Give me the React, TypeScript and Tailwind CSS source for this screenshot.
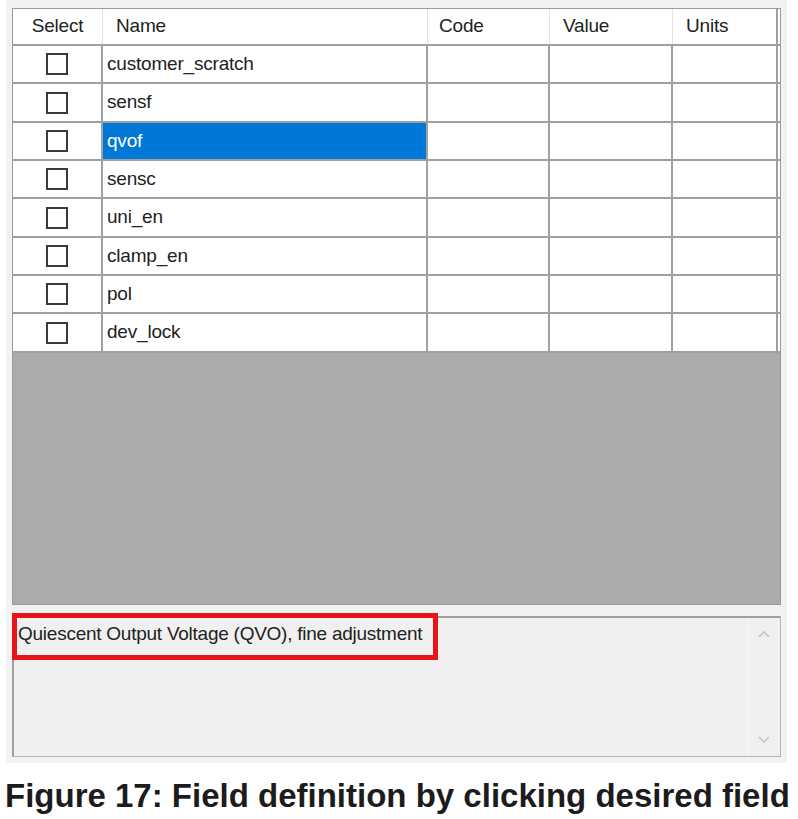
const FIELDS = ['customer_scratch', 'sensf', 'qvof', 'sensc', 'uni_en', 'clamp_en', 'pol', 'dev_lock'];
const SELECTED = 'qvof';

export default function App() {
  return (
    <div className="w-[798px] h-[819px] bg-white font-['Liberation_Sans',Arial,sans-serif] text-[#222]">
      {/* window panel */}
      <div className="w-[781px] ml-[6px] pt-[8px] px-[6px] pb-[6px] bg-[#f2f2f2]">
        {/* grid control */}
        <div className="h-[597px] border border-[#9a9a9a] bg-[#ababab] flex flex-col">
          <div className="flex h-[37px] bg-white border-b-2 border-[#a0a0a0] text-[19px] tracking-[-0.2px]">
            <div className="w-[90px] flex items-center justify-center border-r border-[#e3e3e3]">Select</div>
            <div className="w-[325px] flex items-center pl-[13px] border-r border-[#e3e3e3]">Name</div>
            <div className="w-[122px] flex items-center pl-[11px] border-r border-[#e3e3e3]">Code</div>
            <div className="w-[123px] flex items-center pl-[13px] border-r border-[#e3e3e3]">Value</div>
            <div className="w-[105px] flex items-center pl-[13px] border-r-2 border-[#a0a0a0]">Units</div>
          </div>
          {FIELDS.map((f, i) => (
            <div
              key={f}
              className={`flex bg-white border-b-2 border-[#a0a0a0] text-[19px] tracking-[-0.2px] ${i % 3 === 1 ? 'h-[39px]' : 'h-[38px]'}`}
            >
              <div className="w-[90px] flex items-center justify-center border-r-2 border-[#a0a0a0]">
                <span className="block w-[22px] h-[22px] border-2 border-[#3a3a3a] bg-white" />
              </div>
              <div
                className={`w-[325px] flex items-center pl-[4px] border-r-2 border-[#a0a0a0] ${
                  f === SELECTED ? 'bg-[#0078d7] text-white' : ''
                }`}
              >
                {f}
              </div>
              <div className="w-[122px] border-r-2 border-[#a0a0a0]" />
              <div className="w-[123px] border-r-2 border-[#a0a0a0]" />
              <div className="w-[105px] border-r-2 border-[#a0a0a0]" />
            </div>
          ))}
        </div>

        {/* description box */}
        <div className="relative mt-[11px] h-[141px] flex bg-[#f0f0f0] border-t-2 border-l-2 border-[#a0a0a0] border-r border-b border-r-[#b5b5b5] border-b-[#b5b5b5]">
          <div className="flex-1 pl-[4px] pt-[4px] text-[19px] tracking-[-0.25px] leading-[24px]">
            Quiescent Output Voltage (QVO), fine adjustment
          </div>
          <div className="w-[33px] flex flex-col items-center justify-between py-[12px] border-l border-[#f8f8f8]">
            <svg width="12" height="8" viewBox="0 0 12 8" fill="none" stroke="#c4c4c4" strokeWidth="1.6">
              <path d="M1 7 L6 2 L11 7" />
            </svg>
            <svg width="12" height="8" viewBox="0 0 12 8" fill="none" stroke="#c4c4c4" strokeWidth="1.6">
              <path d="M1 1 L6 6 L11 1" />
            </svg>
          </div>
          {/* annotation highlight */}
          <div className="absolute left-[-2px] top-[-5px] w-[426px] h-[47px] border-[5px] border-[#e8141c]" />
        </div>
      </div>

      <div className="mt-[15px] pl-[5px] text-[33px] leading-[36px] font-bold text-[#1c1c1c] whitespace-nowrap">
        Figure 17: Field definition by clicking desired field
      </div>
    </div>
  );
}
